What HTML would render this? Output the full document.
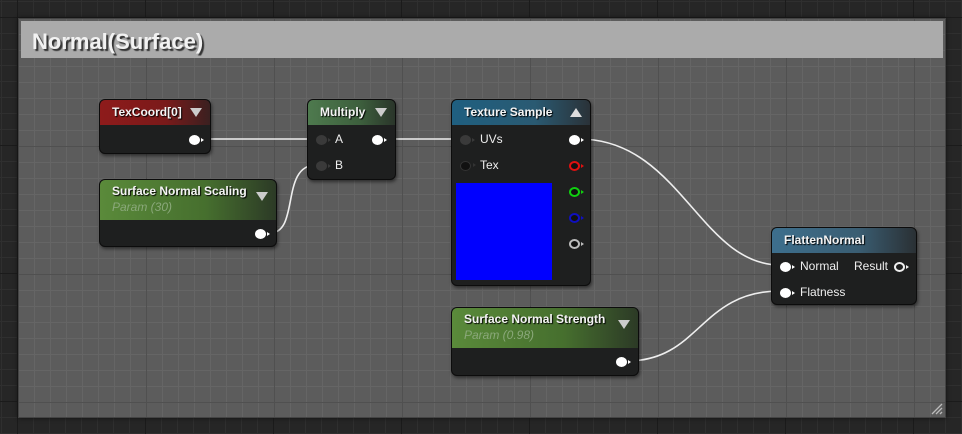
<!DOCTYPE html>
<html><head><meta charset="utf-8"><style>
*{margin:0;padding:0;box-sizing:border-box}
body{width:962px;height:434px;overflow:hidden;background:#262626;font-family:"Liberation Sans",sans-serif;position:relative;
background-image:linear-gradient(#1b1b1b 1px,transparent 1px),linear-gradient(90deg,#1b1b1b 1px,transparent 1px),linear-gradient(#2f2f2f 1px,transparent 1px),linear-gradient(90deg,#2f2f2f 1px,transparent 1px);
background-size:128px 128px,128px 128px,16px 16px,16px 16px;background-position:17px 17px,17px 17px,1px 1px,1px 1px}
.comment{position:absolute;left:18px;top:18px;width:928px;height:400px;background:#5c5c5c;border:1px solid #444;
background-image:linear-gradient(#505050 1px,transparent 1px),linear-gradient(90deg,#505050 1px,transparent 1px),linear-gradient(#656565 1px,transparent 1px),linear-gradient(90deg,#656565 1px,transparent 1px);
background-size:128px 128px,128px 128px,16px 16px,16px 16px;background-position:-1px -1px,-1px -1px,-1px -1px,-1px -1px;box-shadow:0 0 4px #111}
.chead{position:absolute;left:2px;top:2px;right:2px;height:37px;background:#ababab;color:#f2f2f2;font-weight:bold;font-size:22px;padding:8px 0 0 11px;text-shadow:2px 2px 1px #333}
.node{position:absolute;background:#1e1f1f;border:1px solid #0c0c0c;border-radius:6px;box-shadow:1px 2px 3px rgba(0,0,0,.5);overflow:hidden;color:#eee;font-size:12px}
.hd{height:25px;padding:5px 0 0 12px;font-weight:bold;color:#f4f4f4;position:relative;text-shadow:1px 1px 1px #000}
.tri{position:absolute;right:8px;top:8px;width:0;height:0;border-left:6px solid transparent;border-right:6px solid transparent;border-top:9px solid #ccc}
.tri.up{border-top:none;border-bottom:9px solid #ddd}
.sub{font-style:italic;font-weight:normal;color:#8aa87a;margin-top:3px;text-shadow:none}
.pin{position:absolute;width:11px;height:10px;border-radius:50%;background:#fff}
.pin:after{content:"";position:absolute;right:-4px;top:3px;border-top:2px solid transparent;border-bottom:2px solid transparent;border-left:3px solid currentColor}
.pin.r:after{right:-6px;top:1px}
.lbl{position:absolute;font-size:12px;color:#eee}
</style></head><body>
<div class="comment"><div class="chead">Normal(Surface)</div>
<svg style="position:absolute;right:2px;bottom:2px" width="14" height="14"><path d="M3 13L13 3M7 13L13 7M11 13L13 11" stroke="#bbb" stroke-width="1.3"/></svg>
</div>
<svg width="962" height="434" style="position:absolute;left:0;top:0">
<g fill="none" stroke="#eee" stroke-width="1.6">
<path d="M204 139H316"/>
<path d="M383 139H462"/>
<path d="M270 233C300 233 280 165 316 165"/>
<path d="M579 139C680 139 700 265 780 265"/>
<path d="M627 361C700 361 700 291 780 291"/>
</g></svg>

<div class="node" style="left:99px;top:99px;width:112px;height:55px">
<div class="hd" style="background:linear-gradient(90deg,#8e1b1b,#7a1a1a 60%,#3a2020)">TexCoord[0]<div class="tri"></div></div>
<div class="pin" style="left:89px;top:35px;color:#fff"></div>
</div>

<div class="node" style="left:307px;top:99px;width:89px;height:81px">
<div class="hd" style="background:linear-gradient(90deg,#4e7a4e,#3d5f3d 60%,#2a352a)">Multiply<div class="tri"></div></div>
<div class="pin" style="left:8px;top:35px;background:#3a3a3a;color:#3a3a3a"></div><div class="lbl" style="left:27px;top:32px">A</div>
<div class="pin" style="left:8px;top:61px;background:#3a3a3a;color:#3a3a3a"></div><div class="lbl" style="left:27px;top:58px">B</div>
<div class="pin" style="left:64px;top:35px;color:#fff"></div>
</div>

<div class="node" style="left:99px;top:179px;width:178px;height:68px">
<div class="hd" style="height:40px;padding-top:4px;background:linear-gradient(90deg,#5a8a3a,#466f2e 60%,#2c3a26)">Surface Normal Scaling<div class="sub" style="margin-top:2px">Param (30)</div><div class="tri" style="top:12px"></div></div>
<div class="pin" style="left:155px;top:49px;color:#fff"></div>
</div>

<div class="node" style="left:451px;top:99px;width:140px;height:187px">
<div class="hd" style="background:linear-gradient(90deg,#1f5f80,#2a5a72 60%,#2a3238)">Texture Sample<div class="tri up"></div></div>
<div class="pin" style="left:8px;top:35px;background:#3a3a3a;color:#3a3a3a"></div><div class="lbl" style="left:28px;top:32px">UVs</div>
<div class="pin r" style="left:8px;top:61px;background:#111;border:1px solid #333;color:#333"></div><div class="lbl" style="left:28px;top:58px">Tex</div>
<div class="pin" style="left:117px;top:35px;color:#fff"></div>
<div class="pin r" style="left:117px;top:61px;background:#111;border:2px solid #e01010;color:#e01010"></div>
<div class="pin r" style="left:117px;top:87px;background:#111;border:2px solid #10d010;color:#10d010"></div>
<div class="pin r" style="left:117px;top:113px;background:#111;border:2px solid #1010c0;color:#1010c0"></div>
<div class="pin r" style="left:117px;top:139px;background:#111;border:2px solid #bbb;color:#bbb"></div>
<div style="position:absolute;left:4px;top:83px;width:96px;height:97px;background:#0000ff"></div>
</div>

<div class="node" style="left:771px;top:227px;width:146px;height:78px">
<div class="hd" style="background:linear-gradient(90deg,#3d6f8d,#3a5d72 60%,#2a3034)">FlattenNormal</div>
<div class="pin" style="left:8px;top:34px;color:#fff"></div><div class="lbl" style="left:28px;top:31px">Normal</div>
<div class="lbl" style="left:82px;top:31px">Result</div>
<div class="pin r" style="left:122px;top:34px;background:#1e1f1f;border:2px solid #eee;color:#eee"></div>
<div class="pin" style="left:8px;top:60px;color:#fff"></div><div class="lbl" style="left:28px;top:57px">Flatness</div>
</div>

<div class="node" style="left:451px;top:307px;width:188px;height:69px">
<div class="hd" style="height:40px;padding-top:4px;background:linear-gradient(90deg,#5a8a3a,#466f2e 60%,#2c3a26)">Surface Normal Strength<div class="sub" style="margin-top:2px">Param (0.98)</div><div class="tri" style="top:12px"></div></div>
<div class="pin" style="left:164px;top:49px;color:#fff"></div>
</div>
</body></html>
